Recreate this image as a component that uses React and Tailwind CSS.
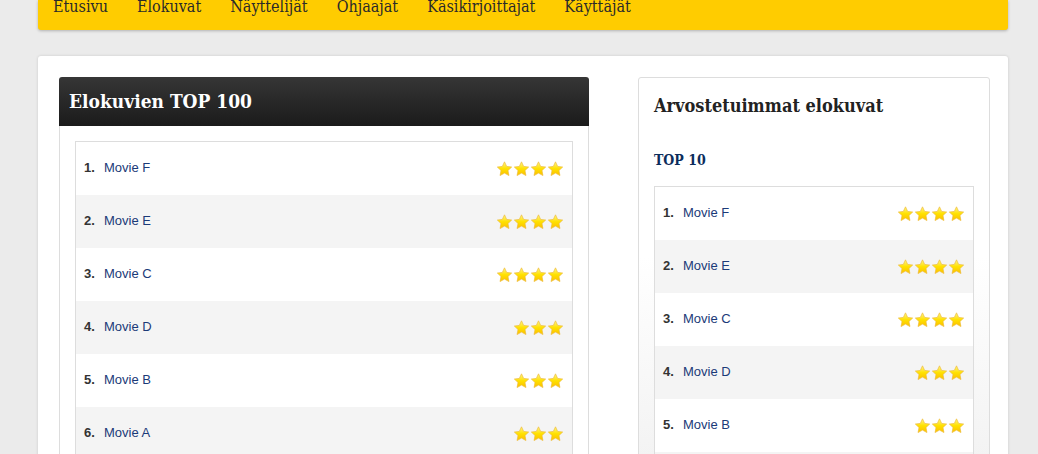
import React from 'react'

const navItems = ['Etusivu', 'Elokuvat', 'Näyttelijät', 'Ohjaajat', 'Käsikirjoittajat', 'Käyttäjät']

const top100 = [
  { name: 'Movie F', stars: 4 },
  { name: 'Movie E', stars: 4 },
  { name: 'Movie C', stars: 4 },
  { name: 'Movie D', stars: 3 },
  { name: 'Movie B', stars: 3 },
  { name: 'Movie A', stars: 3 },
]

const top10 = top100

function Star() {
  return (
    <svg width="17" height="16" viewBox="0 0 24 23" className="block">
      <defs>
        <linearGradient id="sg" x1="0" y1="0" x2="0" y2="1">
          <stop offset="0" stopColor="#fff58a" />
          <stop offset="0.5" stopColor="#ffe100" />
          <stop offset="1" stopColor="#fbbf00" />
        </linearGradient>
      </defs>
      <path
        d="M12 1.2l3.1 6.6 7.2.9-5.3 5 1.4 7.2L12 17.4l-6.4 3.5 1.4-7.2-5.3-5 7.2-.9z"
        fill="url(#sg)"
        stroke="#eebc3a"
        strokeWidth="1"
        strokeLinejoin="round"
      />
    </svg>
  )
}

function MovieList({ items }) {
  return (
    <div className="border border-[#dddddd]">
      {items.map((m, i) => (
        <div
          key={m.name}
          className={`flex items-center h-[53px] pl-[8px] pr-[8px] ${i % 2 ? 'bg-[#f4f4f4]' : 'bg-white'}`}
        >
          <span className="w-[20px] font-bold text-[#333] pb-[2px]">{i + 1}.</span>
          <span className="text-[#1b3a78] pb-[2px]">{m.name}</span>
          <span className="ml-auto flex">
            {Array.from({ length: m.stars }).map((_, k) => (
              <Star key={k} />
            ))}
          </span>
        </div>
      ))}
    </div>
  )
}

export default function App() {
  const slab = "font-['DejaVu_Serif_Condensed','DejaVu_Serif',serif]"
  return (
    <div className="min-h-screen bg-[#ebebeb] font-['Liberation_Sans',Arial,sans-serif] text-[13px] overflow-hidden">
      <div className="ml-[38px] w-[970px]">
        {/* top nav */}
        <div className="h-[30px] bg-[#ffcc00] rounded-b-[3px] shadow-[0_1px_3px_rgba(0,0,0,0.25)] overflow-hidden">
          <div className={`-mt-[3px] flex gap-[29px] pl-[15px] text-[16px] leading-[20px] text-[#2a2a2a] ${slab}`}>
            {navItems.map(n => (
              <span key={n}>{n}</span>
            ))}
          </div>
        </div>

        {/* main */}
        <div className="mt-[26px] bg-white rounded-t-[3px] shadow-[0_0_3px_rgba(0,0,0,0.15)] pt-[21px] pl-[21px] flex h-[420px]">
          {/* left panel */}
          <div className="w-[530px]">
            <div className="h-[49px] rounded-t-[3px] bg-gradient-to-b from-[#363636] to-[#1b1b1b] flex items-center px-[10px]">
              <h1 className={`text-white font-bold text-[19px] ${slab}`}>Elokuvien TOP 100</h1>
            </div>
            <div className="border-x border-[#dddddd] p-[15px]">
              <MovieList items={top100} />
            </div>
          </div>

          {/* right panel */}
          <div className="ml-[49px] w-[352px] border border-[#dddddd] rounded-t-[3px] bg-gradient-to-b from-white from-[45%] to-[#f2f2f2] px-[15px] pt-[16px]">
            <h2 className={`font-bold text-[18px] text-[#222] leading-[24px] ${slab}`}>Arvostetuimmat elokuvat</h2>
            <h3 className={`mt-[32px] font-bold text-[14px] text-[#0c2d5c] leading-[20px] ${slab}`}>TOP 10</h3>
            <div className="mt-[16px]">
              <MovieList items={top10} />
            </div>
          </div>
        </div>
      </div>
    </div>
  )
}
